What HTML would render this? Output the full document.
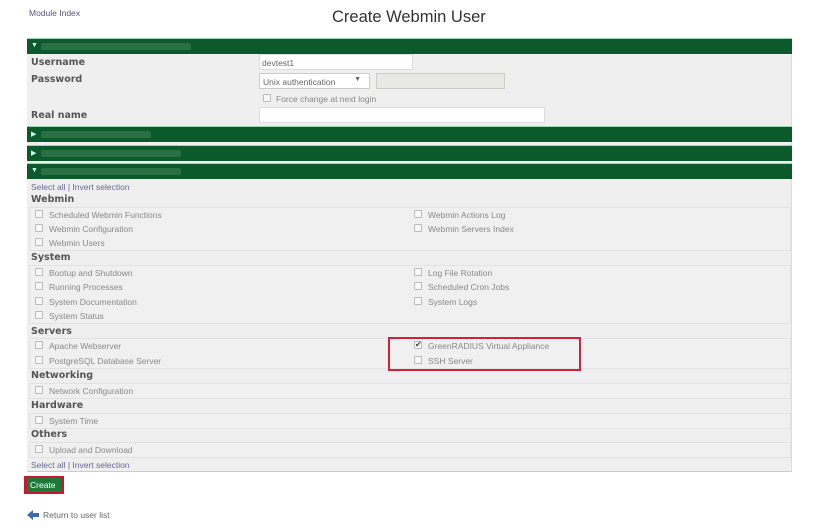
<!DOCTYPE html>
<html><head><meta charset="utf-8"><style>
*{margin:0;padding:0;box-sizing:border-box}
body{width:834px;height:528px;background:#fff;position:relative;overflow:hidden;font-family:"Liberation Sans",sans-serif;color:#888;font-size:8.5px}
.a{position:absolute;white-space:nowrap}
.bar{position:absolute;left:27px;width:765px;background:#0c5a2c;border-top:1px solid #9fd8b4}
.tri{position:absolute;left:4px;color:#cfe;font-size:7px}
.bt{position:absolute;left:14px;top:4px;height:7px;background:#2a7045;border-radius:2px}
.lbl{color:#555;font-weight:bold;font-size:9.5px;font-family:"DejaVu Sans",sans-serif}
.cb{position:absolute;width:8px;height:8px;border:1px solid #bbb;background:#f8f8f8;border-radius:1px}
.box{position:absolute;left:29px;width:762px;border:1px solid #e2e2e2;background:#f0f0f0}
.link{color:#669}
</style></head><body>
<div class="a" style="left:29px;top:8px;color:#557">Module Index</div>
<div class="a" style="left:332px;top:8px;font-size:16.5px;color:#333">Create Webmin User</div>

<div style="position:absolute;left:27px;top:38px;width:765px;height:434px;background:#efefef;border-right:1px solid #ddd;border-bottom:1px solid #ccc"></div>

<div class="bar" style="top:38px;height:16px"><span class="tri" style="top:3px">▼</span><span class="bt" style="width:150px"></span></div>
<div class="a lbl" style="left:31px;top:57px">Username</div>
<div class="a" style="left:259px;top:54px;width:154px;height:16px;background:#fff;border:1px solid #ddd;padding:3px 2px;color:#666">devtest1</div>
<div class="a lbl" style="left:31px;top:74px">Password</div>
<div class="a" style="left:259px;top:73px;width:111px;height:16px;background:#fff;border:1px solid #ccc;padding:3px 3px;color:#666">Unix authentication<span style="position:absolute;right:8px;top:2px;font-size:7px">▼</span></div>
<div class="a" style="left:376px;top:73px;width:129px;height:16px;background:#e8e8e4;border:1px solid #ccc"></div>
<div class="cb" style="left:263px;top:94px"></div>
<div class="a" style="left:276px;top:94px">Force change at next login</div>
<div class="a lbl" style="left:31px;top:110px">Real name</div>
<div class="a" style="left:259px;top:107px;width:286px;height:16px;background:#fff;border:1px solid #ddd"></div>

<div class="bar" style="top:126px;height:16px"><span class="tri" style="top:3px">▶</span><span class="bt" style="width:110px"></span></div>
<div class="bar" style="top:145px;height:16px"><span class="tri" style="top:3px">▶</span><span class="bt" style="width:140px"></span></div>
<div class="bar" style="top:163px;height:16px"><span class="tri" style="top:3px">▼</span><span class="bt" style="width:140px"></span></div>

<div class="a link" style="left:31px;top:182px">Select all | Invert selection</div>
<div class="a lbl" style="left:31px;top:194px">Webmin</div>
<div class="box" style="top:207px;height:44px"></div>
<div class="box" style="top:265px;height:59px"></div>
<div class="box" style="top:338px;height:31px"></div>
<div class="box" style="top:383px;height:16px"></div>
<div class="box" style="top:413px;height:16px"></div>
<div class="box" style="top:442px;height:16px"></div>

<div class="cb" style="left:35px;top:210px"></div><div class="a" style="left:49px;top:210px">Scheduled Webmin Functions</div>
<div class="cb" style="left:35px;top:224px"></div><div class="a" style="left:49px;top:224px">Webmin Configuration</div>
<div class="cb" style="left:35px;top:238px"></div><div class="a" style="left:49px;top:238px">Webmin Users</div>
<div class="cb" style="left:414px;top:210px"></div><div class="a" style="left:428px;top:210px">Webmin Actions Log</div>
<div class="cb" style="left:414px;top:224px"></div><div class="a" style="left:428px;top:224px">Webmin Servers Index</div>

<div class="a lbl" style="left:31px;top:252px">System</div>
<div class="cb" style="left:35px;top:268px"></div><div class="a" style="left:49px;top:268px">Bootup and Shutdown</div>
<div class="cb" style="left:35px;top:282px"></div><div class="a" style="left:49px;top:282px">Running Processes</div>
<div class="cb" style="left:35px;top:297px"></div><div class="a" style="left:49px;top:297px">System Documentation</div>
<div class="cb" style="left:35px;top:311px"></div><div class="a" style="left:49px;top:311px">System Status</div>
<div class="cb" style="left:414px;top:268px"></div><div class="a" style="left:428px;top:268px">Log File Rotation</div>
<div class="cb" style="left:414px;top:282px"></div><div class="a" style="left:428px;top:282px">Scheduled Cron Jobs</div>
<div class="cb" style="left:414px;top:297px"></div><div class="a" style="left:428px;top:297px">System Logs</div>

<div class="a lbl" style="left:31px;top:326px">Servers</div>
<div class="cb" style="left:35px;top:341px"></div><div class="a" style="left:49px;top:341px">Apache Webserver</div>
<div class="cb" style="left:35px;top:356px"></div><div class="a" style="left:49px;top:356px">PostgreSQL Database Server</div>
<div class="cb" style="left:414px;top:341px;font-size:8px;line-height:6px;color:#444">✔</div><div class="a" style="left:428px;top:341px">GreenRADIUS Virtual Appliance</div>
<div class="cb" style="left:414px;top:356px"></div><div class="a" style="left:428px;top:356px">SSH Server</div>
<div class="a" style="left:388px;top:337px;width:193px;height:34px;border:2px solid #d0203a"></div>

<div class="a lbl" style="left:31px;top:370px">Networking</div>
<div class="cb" style="left:35px;top:386px"></div><div class="a" style="left:49px;top:386px">Network Configuration</div>
<div class="a lbl" style="left:31px;top:400px">Hardware</div>
<div class="cb" style="left:35px;top:416px"></div><div class="a" style="left:49px;top:416px">System Time</div>
<div class="a lbl" style="left:31px;top:429px">Others</div>
<div class="cb" style="left:35px;top:445px"></div><div class="a" style="left:49px;top:445px">Upload and Download</div>
<div class="a link" style="left:31px;top:460px">Select all | Invert selection</div>

<div class="a" style="left:24px;top:476px;width:40px;height:18px;background:#c8182c"></div>
<div class="a" style="left:27px;top:478px;width:34px;height:14px;background:#1e7a3a;color:#fff;font-size:8.5px;padding:2px 3px">Create</div>

<svg class="a" style="left:27px;top:510px" width="12" height="10" viewBox="0 0 12 10"><path d="M0 5 L6 0 L6 3 L12 3 L12 7 L6 7 L6 10 Z" fill="#3a6ab0"/></svg>
<div class="a" style="left:43px;top:510px;color:#666">Return to user list</div>
</body></html>
